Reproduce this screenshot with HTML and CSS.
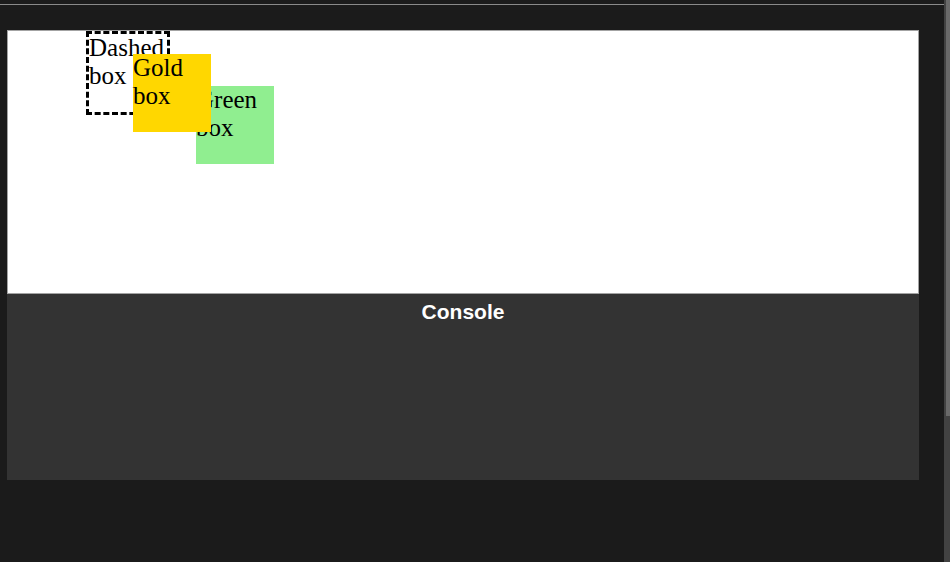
FILE: index.html
```html
<!DOCTYPE html>
<html>
<head>
<meta charset="utf-8">
<link rel="stylesheet" href="styles.css">
</head>
<body>
<div class="page">
  <div class="main">
    <div class="topline"></div>
    <div class="workspace">
      <div class="frame">
        <div class="box dashed">Dashed box</div>
        <div class="box gold">Gold box</div>
        <div class="box green">Green box</div>
      </div>
      <div class="console">
        <div class="console-title">Console</div>
      </div>
    </div>
  </div>
  <div class="scrollbar"><div class="thumb"></div></div>
</div>
</body>
</html>
```

FILE: styles.css
```css
html, body {
  margin: 0;
  padding: 0;
  background: #1b1b1b;
  height: 100%;
  overflow: hidden;
}
.page {
  display: flex;
  height: 562px;
}
.main {
  flex: 1;
  min-width: 0;
}
.topline {
  height: 4px;
  border-bottom: 1px solid #8a8a8a;
}
.workspace {
  padding: 25px 0 0 7px;
}
.frame {
  position: relative;
  width: 910px;
  height: 262px;
  background: #ffffff;
  border: 1px solid #a3a3a3;
  overflow: hidden;
  font-family: "Liberation Serif", serif;
  font-size: 25px;
  line-height: 28px;
  color: #000;
}
.box {
  position: absolute;
  width: 78px;
  height: 78px;
  box-sizing: content-box;
}
.dashed {
  left: 78px;
  top: 0;
  border: 3px dashed #000;
  z-index: 1;
}
.gold {
  left: 125px;
  top: 23px;
  background: #ffd700;
  z-index: 3;
}
.green {
  left: 188px;
  top: 55px;
  background: #90ee90;
  z-index: 2;
}
.console {
  width: 912px;
  height: 186px;
  background: #333333;
}
.console-title {
  padding-top: 6px;
  text-align: center;
  color: #ffffff;
  font-family: "Liberation Sans", Arial, sans-serif;
  font-weight: bold;
  font-size: 21px;
}
.scrollbar {
  width: 6px;
  background: #424242;
  display: flex;
  justify-content: flex-end;
}
.thumb {
  width: 4px;
  height: 416px;
  background: #6a6a6a;
}
```
